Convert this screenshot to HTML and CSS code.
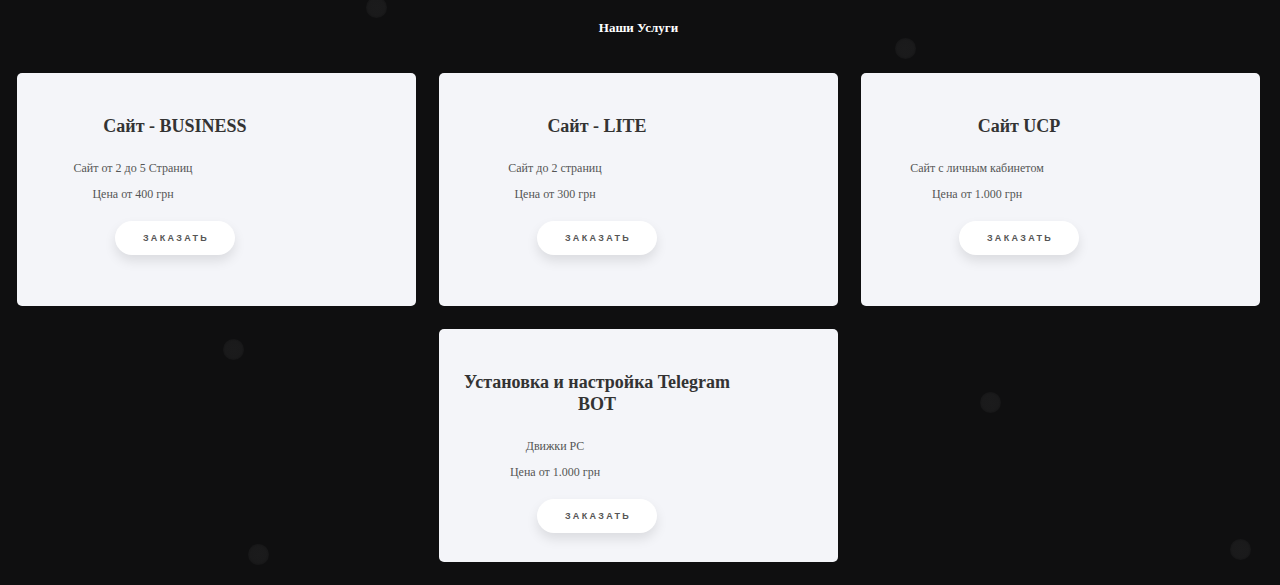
FILE: index.html
```html
<!DOCTYPE html>
<html lang="ru">
<head>
<meta charset="utf-8">
<title>Наши Услуги</title>
<link rel="stylesheet" href="styles.css">
</head>
<body>
<div class="particles">
  <span class="dot" style="left:366px;top:-3px"></span>
  <span class="dot" style="left:895px;top:38px"></span>
  <span class="dot" style="left:223px;top:339px"></span>
  <span class="dot" style="left:980px;top:392px"></span>
  <span class="dot" style="left:248px;top:544px"></span>
  <span class="dot" style="left:1230px;top:539px"></span>
</div>
<main class="services">
  <h2 class="services-title">Наши Услуги</h2>
  <div class="grid">
    <div class="card">
      <div class="card-body">
        <h3 class="card-title">Сайт - BUSINESS</h3>
        <div class="desc">
          <p>Сайт от 2 до 5 Страниц</p>
          <p>Цена от 400 грн</p>
        </div>
        <button class="btn">ЗАКАЗАТЬ</button>
      </div>
    </div>
    <div class="card">
      <div class="card-body">
        <h3 class="card-title">Сайт - LITE</h3>
        <div class="desc">
          <p>Сайт до 2 страниц</p>
          <p>Цена от 300 грн</p>
        </div>
        <button class="btn">ЗАКАЗАТЬ</button>
      </div>
    </div>
    <div class="card">
      <div class="card-body">
        <h3 class="card-title">Сайт UCP</h3>
        <div class="desc">
          <p>Сайт с личным кабинетом</p>
          <p>Цена от 1.000 грн</p>
        </div>
        <button class="btn">ЗАКАЗАТЬ</button>
      </div>
    </div>
    <div class="card card-center">
      <div class="card-body">
        <h3 class="card-title">Установка и настройка Telegram BOT</h3>
        <div class="desc">
          <p>Движки PC</p>
          <p>Цена от 1.000 грн</p>
        </div>
        <button class="btn">ЗАКАЗАТЬ</button>
      </div>
    </div>
  </div>
</main>
</body>
</html>
```
FILE: styles.css
```css
html, body {
  margin: 0;
  padding: 0;
  background: #0f0f10;
  height: 100%;
  overflow: hidden;
}
body {
  font-family: "Liberation Serif", "Times New Roman", serif;
  position: relative;
}
.particles {
  position: absolute;
  inset: 0;
  z-index: 0;
}
.dot {
  position: absolute;
  width: 21px;
  height: 21px;
  border-radius: 50%;
  background: radial-gradient(circle, #1b1b1c 0%, #1a1a1b 55%, #0f0f10 100%);
}
.services {
  position: relative;
  z-index: 1;
  padding: 20px 20px 0 17px;
}
.services-title {
  margin: 0 0 37px;
  text-align: center;
  color: #ffffff;
  font-size: 13px;
  font-weight: 600;
  line-height: 16px;
}
.grid {
  display: grid;
  grid-template-columns: repeat(3, 399px);
  column-gap: 23px;
  row-gap: 23px;
}
.card {
  background: #f4f5f9;
  border-radius: 5px;
  height: 233px;
  box-sizing: border-box;
  padding-top: 42px;
}
.card-center {
  grid-column: 2;
}
.card-body {
  width: 316px;
  display: flex;
  flex-direction: column;
  align-items: center;
  text-align: center;
}
.card-title {
  margin: 0;
  font-size: 18px;
  line-height: 22px;
  font-weight: 700;
  color: #333333;
  width: 290px;
}
.desc {
  align-self: flex-start;
  width: 232px;
  margin-top: 23px;
  display: flex;
  flex-direction: column;
  gap: 10px;
}
.desc p {
  margin: 0;
  font-size: 12px;
  line-height: 16px;
  color: #555555;
}
.btn {
  margin-top: 19px;
  width: 120px;
  height: 34px;
  border: none;
  border-radius: 17px;
  background: #ffffff;
  box-shadow: 0 6px 12px rgba(0, 0, 0, 0.1);
  font-family: "Liberation Sans", Arial, sans-serif;
  font-size: 9px;
  font-weight: 700;
  letter-spacing: 2.3px;
  padding: 0 0 0 2px;
  color: #555555;
}
```
